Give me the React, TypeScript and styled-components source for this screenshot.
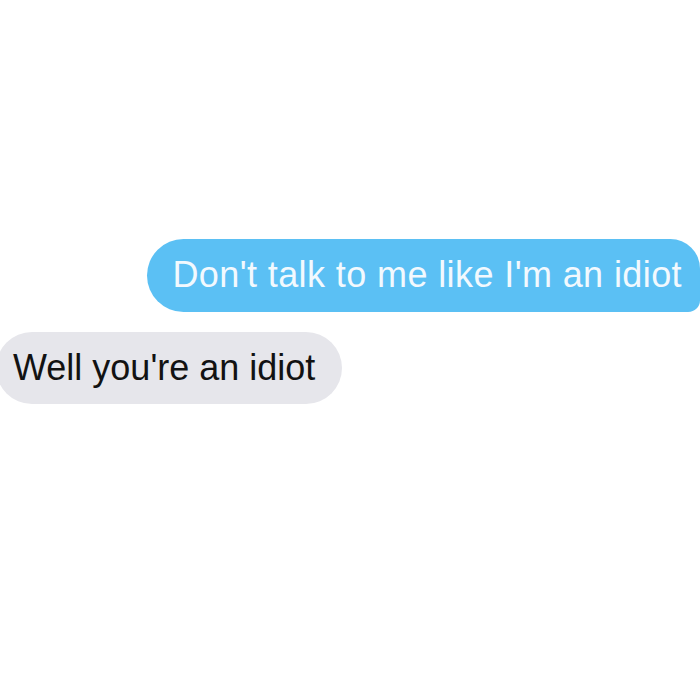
import React from "react";
import styled, { createGlobalStyle } from "styled-components";

const Global = createGlobalStyle`
  html, body { margin: 0; padding: 0; background: #ffffff; }
  body { width: 700px; height: 700px; overflow: hidden; }
`;

const Thread = styled.div`
  width: 700px;
  height: 700px;
  box-sizing: border-box;
  padding-top: 239px;
  display: flex;
  flex-direction: column;
  gap: 20px;
  background: #ffffff;
  font-family: "Liberation Sans", Arial, sans-serif;
  overflow: hidden;
`;

const Row = styled.div<{ $out?: boolean }>`
  display: flex;
  justify-content: ${(p) => (p.$out ? "flex-end" : "flex-start")};
  margin-left: ${(p) => (p.$out ? "0" : "-4px")};
`;

const Bubble = styled.div<{ $out?: boolean }>`
  display: flex;
  align-items: center;
  box-sizing: border-box;
  height: ${(p) => (p.$out ? "73px" : "72px")};
  padding: ${(p) => (p.$out ? "0 18px 0 25px" : "0 27px 0 17px")};
  border-radius: ${(p) => (p.$out ? "37px 30px 12px 37px" : "37px")};
  background: ${(p) => (p.$out ? "#5bc0f4" : "#e6e6eb")};
  color: ${(p) => (p.$out ? "#f2f9fe" : "#121212")};
  font-size: 36px;
  line-height: 1.117;
  white-space: nowrap;
  letter-spacing: ${(p) => (p.$out ? "0.4px" : "0")};
`;

export default function App() {
  return (
    <>
      <Global />
      <Thread>
        <Row $out>
          <Bubble $out>Don't talk to me like I'm an idiot</Bubble>
        </Row>
        <Row>
          <Bubble>Well you're an idiot</Bubble>
        </Row>
      </Thread>
    </>
  );
}
